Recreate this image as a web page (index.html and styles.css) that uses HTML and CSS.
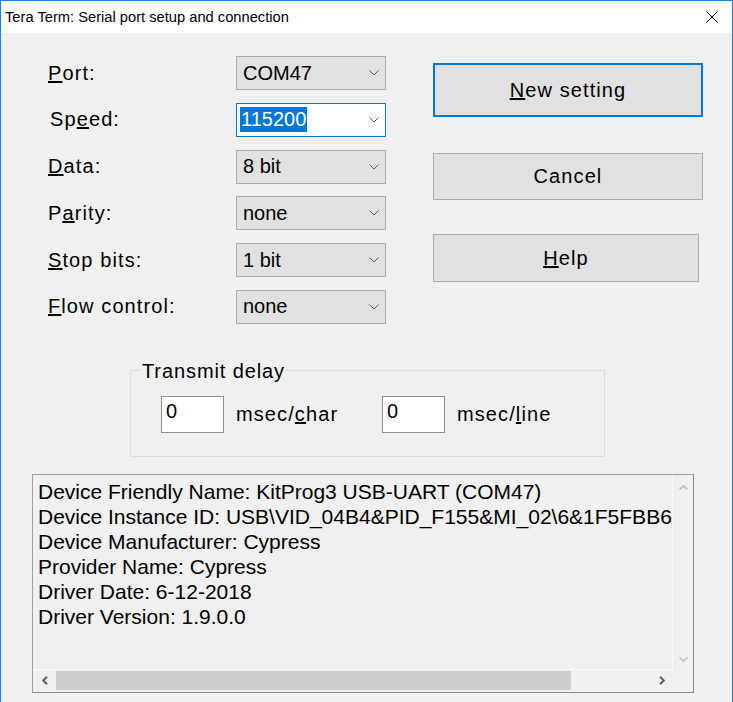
FILE: index.html
```html
<!DOCTYPE html>
<html>
<head>
<meta charset="utf-8">
<title>Tera Term: Serial port setup and connection</title>
<link rel="stylesheet" href="styles.css">
</head>
<body>
<div class="window">
  <div class="titlebar">
    <span class="title">Tera Term: Serial port setup and connection</span>
    <svg class="close" width="12" height="12" viewBox="0 0 12 12"><path d="M0.5 0.5 L11.5 11.5 M11.5 0.5 L0.5 11.5" stroke="#000" stroke-width="1" fill="none"/></svg>
  </div>
  <div class="client">
    <div class="top">
      <div class="fields">
        <div class="lbl"><u>P</u>ort:</div>
        <div class="combo"><span class="val">COM47</span><svg class="chev" width="10" height="6" viewBox="0 0 10 6"><polyline points="0.5,0.5 5,5 9.5,0.5" fill="none" stroke="#5a5a5a" stroke-width="1"/></svg></div>

        <div class="lbl lbl-speed">Sp<u>e</u>ed:</div>
        <div class="combo combo-focus"><span class="val sel">115200</span><svg class="chev" width="10" height="6" viewBox="0 0 10 6"><polyline points="0.5,0.5 5,5 9.5,0.5" fill="none" stroke="#5a5a5a" stroke-width="1"/></svg></div>

        <div class="lbl"><u>D</u>ata:</div>
        <div class="combo"><span class="val">8 bit</span><svg class="chev" width="10" height="6" viewBox="0 0 10 6"><polyline points="0.5,0.5 5,5 9.5,0.5" fill="none" stroke="#5a5a5a" stroke-width="1"/></svg></div>

        <div class="lbl">P<u>a</u>rity:</div>
        <div class="combo"><span class="val">none</span><svg class="chev" width="10" height="6" viewBox="0 0 10 6"><polyline points="0.5,0.5 5,5 9.5,0.5" fill="none" stroke="#5a5a5a" stroke-width="1"/></svg></div>

        <div class="lbl"><u>S</u>top bits:</div>
        <div class="combo"><span class="val">1 bit</span><svg class="chev" width="10" height="6" viewBox="0 0 10 6"><polyline points="0.5,0.5 5,5 9.5,0.5" fill="none" stroke="#5a5a5a" stroke-width="1"/></svg></div>

        <div class="lbl"><u>F</u>low control:</div>
        <div class="combo"><span class="val">none</span><svg class="chev" width="10" height="6" viewBox="0 0 10 6"><polyline points="0.5,0.5 5,5 9.5,0.5" fill="none" stroke="#5a5a5a" stroke-width="1"/></svg></div>
      </div>
      <div class="buttons">
        <div class="btn btn-default"><u>N</u>ew setting</div>
        <div class="btn btn-cancel">Cancel</div>
        <div class="btn btn-help"><u>H</u>elp</div>
      </div>
    </div>

    <fieldset class="delay">
      <legend>Transmit delay</legend>
      <div class="delay-row">
        <div class="edit">0</div>
        <span class="unit unit-char">msec/<u>c</u>har</span>
        <div class="edit">0</div>
        <span class="unit">msec/<u>l</u>ine</span>
      </div>
    </fieldset>

    <div class="info">
      <div class="info-text">
        <div>Device Friendly Name: KitProg3 USB-UART (COM47)</div>
        <div>Device Instance ID: USB\VID_04B4&amp;PID_F155&amp;MI_02\6&amp;1F5FBB6&amp;0&amp;0002</div>
        <div>Device Manufacturer: Cypress</div>
        <div>Provider Name: Cypress</div>
        <div>Driver Date: 6-12-2018</div>
        <div>Driver Version: 1.9.0.0</div>
      </div>
      <div class="vscroll">
        <svg width="9" height="5" viewBox="0 0 9 5"><polyline points="0.5,4.5 4.5,0.8 8.5,4.5" fill="none" stroke="#bcbcbc" stroke-width="1.5"/></svg>
        <svg width="9" height="5" viewBox="0 0 9 5"><polyline points="0.5,0.5 4.5,4.2 8.5,0.5" fill="none" stroke="#bcbcbc" stroke-width="1.5"/></svg>
      </div>
      <div class="hscroll">
        <div class="harrow">
          <svg width="6" height="9" viewBox="0 0 6 9"><polyline points="5,0.8 1.2,4.5 5,8.2" fill="none" stroke="#606060" stroke-width="2"/></svg>
        </div>
        <div class="thumb"></div>
        <div class="track"></div>
        <div class="harrow">
          <svg width="6" height="9" viewBox="0 0 6 9"><polyline points="1,0.8 4.8,4.5 1,8.2" fill="none" stroke="#606060" stroke-width="2"/></svg>
        </div>
      </div>
      <div class="corner"></div>
    </div>
  </div>
</div>
</body>
</html>
```

FILE: styles.css
```css
html, body {
  margin: 0;
  padding: 0;
  background: #f0f0f0;
}

body {
  font-family: "Liberation Sans", Arial, sans-serif;
  color: #000;
}

.window {
  width: 733px;
  height: 702px;
  box-sizing: border-box;
  border: 1px solid #1883d7;
  border-bottom: none;
  background: #f0f0f0;
  overflow: hidden;
}

.titlebar {
  height: 32px;
  background: #fff;
  display: flex;
  align-items: center;
  justify-content: space-between;
  padding: 0 14px 0 4px;
}

.title {
  font-size: 14.7px;
  line-height: 18px;
}

.close {
  display: block;
}

.client {
  display: flex;
  flex-direction: column;
}

.top {
  display: flex;
  align-items: flex-start;
}

.fields {
  margin-left: 47px;
  padding-top: 23px;
  display: grid;
  grid-template-columns: 188px 150px;
  grid-auto-rows: 34px;
  row-gap: 12.8px;
}

.lbl {
  display: flex;
  align-items: center;
  font-size: 20px;
  letter-spacing: 1.1px;
}

.lbl-speed {
  padding-left: 2px;
}

.combo {
  box-sizing: border-box;
  border: 1px solid #adadad;
  background: #e1e1e1;
  display: flex;
  align-items: center;
  justify-content: space-between;
  padding: 0 6px 0 6px;
  font-size: 20px;
}

.combo-focus {
  background: #fff;
  border-color: #0078d7;
  padding-left: 3px;
}

.val {
  line-height: 25px;
}

.sel {
  background: #0078d7;
  color: #fff;
  padding: 0 1px;
}

.chev {
  display: block;
}

.buttons {
  margin-left: 47px;
  padding-top: 30px;
  display: flex;
  flex-direction: column;
}

.btn {
  box-sizing: border-box;
  background: #e1e1e1;
  border: 1px solid #adadad;
  display: flex;
  align-items: center;
  justify-content: center;
  font-size: 20px;
  letter-spacing: 1.1px;
}

.btn-default {
  width: 270px;
  height: 54px;
  border: 2px solid #0078d7;
}

.btn-cancel {
  width: 270px;
  height: 47px;
  margin-top: 36px;
}

.btn-help {
  width: 266px;
  height: 48px;
  margin-top: 34px;
}

.delay {
  margin: 36px 0 0 129px;
  width: 475px;
  box-sizing: border-box;
  border: 1px solid #dcdcdc;
  padding: 14px 0 23px 10px;
  min-width: 0;
}

.delay legend {
  font-size: 20px;
  letter-spacing: 0.9px;
  line-height: 22px;
  padding: 0 1px;
}

.delay-row {
  display: flex;
  align-items: center;
  padding-left: 20px;
  height: 37px;
}

.edit {
  box-sizing: border-box;
  width: 63px;
  height: 37px;
  background: #fff;
  border: 1px solid #8f8f8f;
  font-size: 20px;
  line-height: 22px;
  padding: 3px 0 0 4px;
}

.unit {
  font-size: 20px;
  letter-spacing: 1.1px;
  margin-left: 12px;
}

.unit-char {
  width: 134px;
  margin-right: 12px;
}

.info {
  margin: 17px 0 0 31px;
  width: 662px;
  height: 219px;
  box-sizing: border-box;
  border: 1px solid #8a8a8a;
  border-top-color: #a0a0a0;
  border-left-color: #a0a0a0;
  background: #f0f0f0;
  display: grid;
  grid-template-columns: 1fr 20px;
  grid-template-rows: 1fr 22px;
}

.info-text {
  overflow: hidden;
  white-space: nowrap;
  padding: 4px 0 0 5px;
  font-size: 21px;
  line-height: 25px;
  border-right: 1px solid #fbfbfb;
  border-bottom: 1px solid #fbfbfb;
}

.vscroll {
  display: flex;
  flex-direction: column;
  justify-content: space-between;
  align-items: center;
  padding: 10px 0 8px 0;
}

.vscroll svg {
  display: block;
}

.hscroll {
  display: flex;
  align-items: center;
}

.harrow {
  width: 23px;
  height: 19px;
  display: flex;
  align-items: center;
  justify-content: center;
}

.harrow svg {
  display: block;
}

.thumb {
  width: 515px;
  height: 19px;
  background: #cdcdcd;
}

.track {
  flex: 1;
}

.corner {
  background: #f0f0f0;
}
```
